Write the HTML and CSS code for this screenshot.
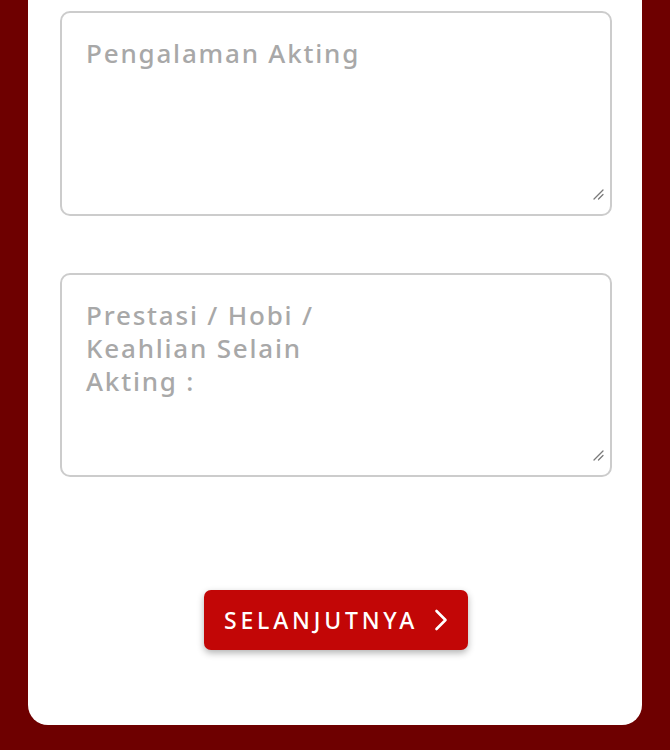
FILE: index.html
```html
<!DOCTYPE html>
<html lang="id">
<head>
<meta charset="utf-8">
<title>Form</title>
<link rel="stylesheet" href="styles.css">
</head>
<body>
<div class="page">
  <div class="card">
    <div class="field-wrap">
      <textarea class="field" placeholder="Pengalaman Akting"></textarea>
      <svg class="grip" width="12" height="12" viewBox="0 0 12 12"><path d="M2 11 L11 2 M6.5 11 L11 6.5" stroke="#7a7a7a" stroke-width="1.3" stroke-linecap="round"/></svg>
    </div>
    <div class="field-wrap field-second">
      <textarea class="field" placeholder="Prestasi / Hobi /
Keahlian Selain
Akting :"></textarea>
      <svg class="grip" width="12" height="12" viewBox="0 0 12 12"><path d="M2 11 L11 2 M6.5 11 L11 6.5" stroke="#7a7a7a" stroke-width="1.3" stroke-linecap="round"/></svg>
    </div>
    <div class="actions">
      <button class="next" type="button">SELANJUTNYA
        <svg class="chev" width="14" height="22" viewBox="0 0 14 22"><path d="M2.5 2 L11.5 11 L2.5 20" fill="none" stroke="#fff" stroke-width="2.6" stroke-linecap="round" stroke-linejoin="round"/></svg>
      </button>
    </div>
  </div>
</div>
</body>
</html>
```
FILE: styles.css
```css
* { box-sizing: border-box; }
html, body { margin: 0; padding: 0; }
body {
  background: #6e0000;
  font-family: "Noto Sans", Lato, sans-serif;
}
.page {
  height: 100vh;
  overflow: hidden;
  display: flex;
  flex-direction: column;
  justify-content: flex-end;
  padding: 0 28px 25px 28px;
}
.card {
  flex-shrink: 0;
  background: #fff;
  border-radius: 20px;
  padding: 60px 30px 75px 32px;
  display: flex;
  flex-direction: column;
}
.field-wrap {
  position: relative;
  height: 205px;
}
.field-second {
  margin-top: 57px;
  height: 204px;
}
.field {
  display: block;
  width: 100%;
  height: 100%;
  border: 2px solid #cccccc;
  border-radius: 10px;
  padding: 24px 24px 22px 24px;
  font-family: "Noto Sans", Lato, sans-serif;
  font-weight: 500;
  font-size: 26px;
  line-height: 33px;
  letter-spacing: 1.8px;
  color: #333;
  resize: none;
  outline: none;
  background: #fff;
}
.field::placeholder {
  color: #a8a8a8;
  opacity: 1;
}
.grip {
  position: absolute;
  right: 8px;
  bottom: 16px;
}
.actions {
  margin-top: 113px;
  display: flex;
  justify-content: center;
}
.next {
  width: 264px;
  height: 60px;
  border: none;
  border-radius: 7px;
  background: #c20606;
  color: #fff;
  font-family: "Noto Sans", Lato, sans-serif;
  font-weight: 500;
  font-size: 23px;
  letter-spacing: 3.8px;
  display: flex;
  align-items: center;
  justify-content: center;
  gap: 16px;
  box-shadow: 0 3px 7px rgba(0,0,0,0.3);
  cursor: pointer;
  padding: 0 0 0 0;
}
.chev { display: block; }
```
